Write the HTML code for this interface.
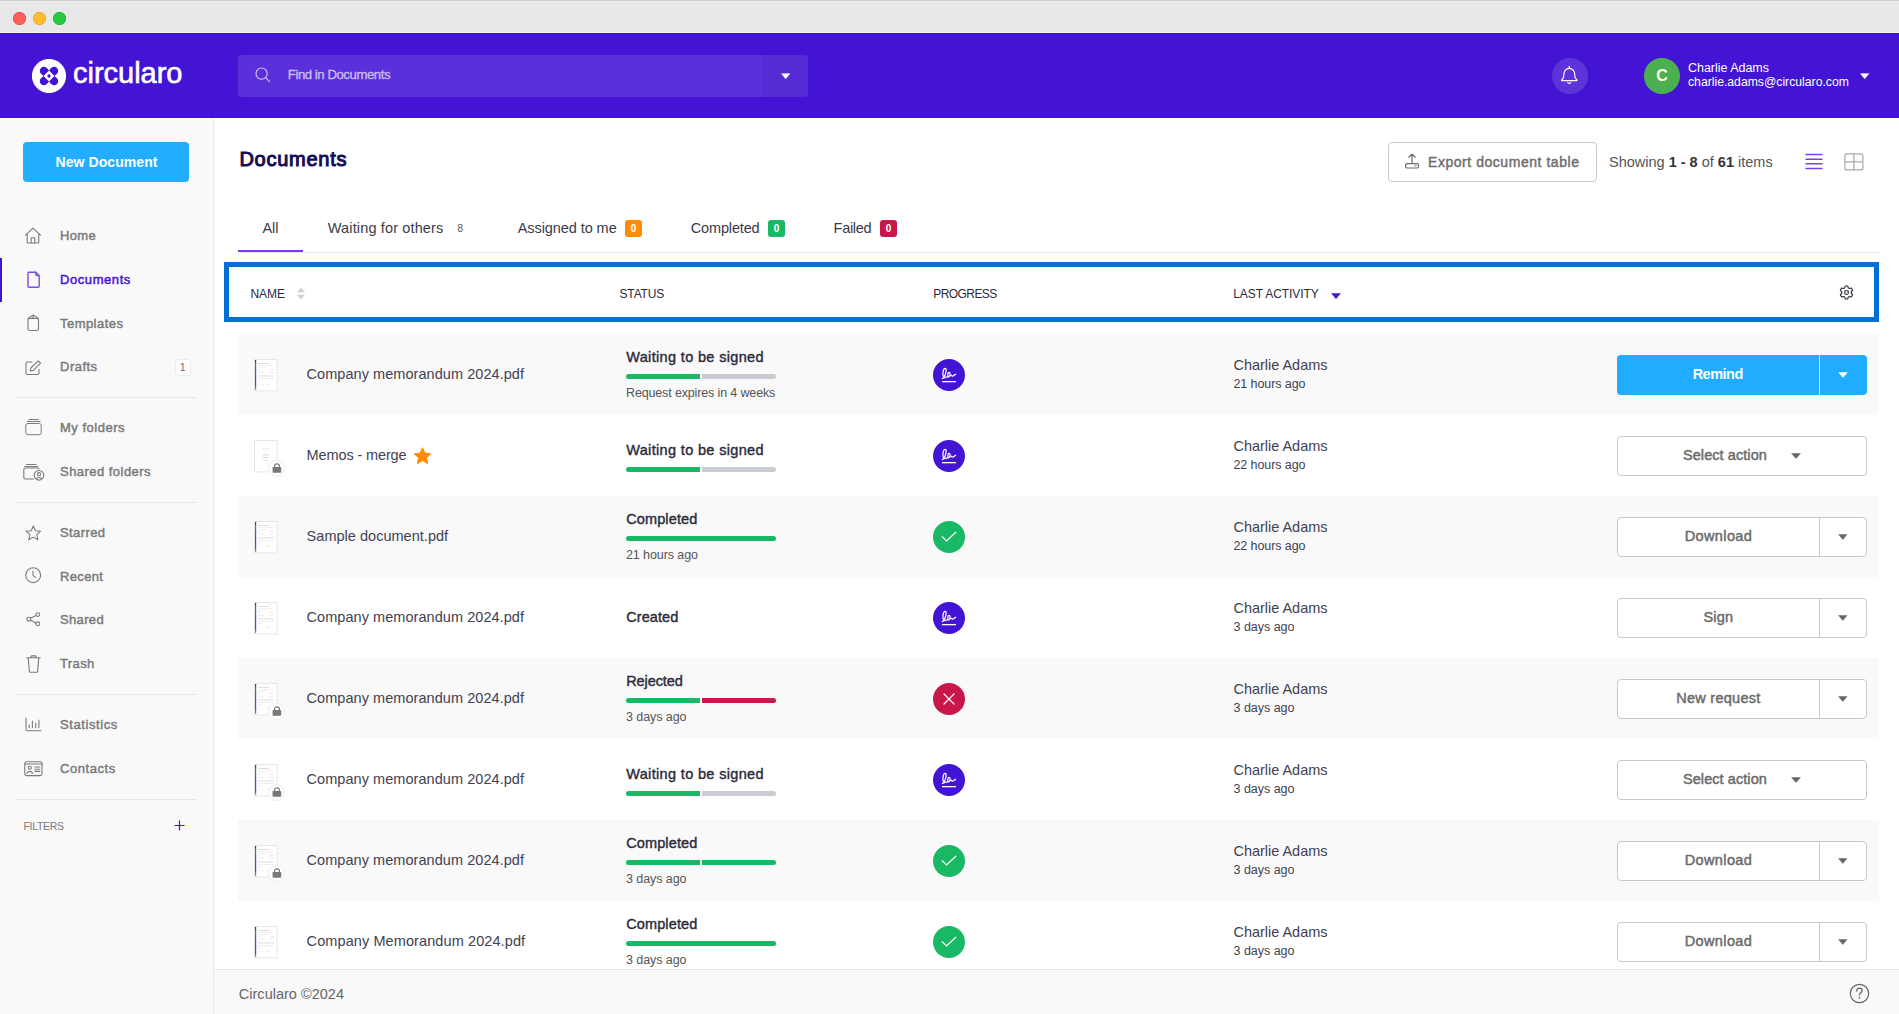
<!DOCTYPE html>
<html><head><meta charset="utf-8"><title>Circularo Documents</title>
<style>
html,body{margin:0;padding:0;width:1899px;height:1014px;overflow:hidden;background:#fff;}
body{position:relative;font-family:"Liberation Sans",sans-serif;}
.t{position:absolute;line-height:1;white-space:nowrap;}
.b{position:absolute;display:block;}
</style></head><body>
<div class="b" style="left:0px;top:0px;width:1899px;height:33px;background:#e8e8e8;"></div>
<div class="b" style="left:0px;top:0px;width:1899px;height:1px;background:#cdcdcd;"></div>
<div class="b" style="left:0px;top:1px;width:1899px;height:1px;background:#ebebeb;"></div>
<div class="b" style="left:0px;top:32px;width:1899px;height:1px;background:#f3f3ee;"></div>
<div class="b" style="left:12.5px;top:11.5px;width:13px;height:13px;background:#fe5f57;border-radius:50%;box-shadow:inset 0 0 0 0.6px #e2463f;"></div>
<div class="b" style="left:32.5px;top:11.5px;width:13px;height:13px;background:#febc2e;border-radius:50%;box-shadow:inset 0 0 0 0.6px #e1a116;"></div>
<div class="b" style="left:52.5px;top:11.5px;width:13px;height:13px;background:#28c840;border-radius:50%;box-shadow:inset 0 0 0 0.6px #14ae2c;"></div>
<div class="b" style="left:0px;top:33px;width:1899px;height:85px;background:#4314d4;"></div>
<svg class="b" style="left:31.75px;top:58.7px;" width="34" height="34" viewBox="0 0 34 34"><circle cx="17" cy="17" r="17.1" fill="#fff"/><g fill="#4314d4"><g transform="rotate(0 17 17)"><path d="M17.000 11.600 L15.041 9.265 A4.1 4.1 0 1 0 9.265 15.041 L11.600 17.000 Z"/></g><g transform="rotate(90 17 17)"><path d="M17.000 11.600 L15.041 9.265 A4.1 4.1 0 1 0 9.265 15.041 L11.600 17.000 Z"/></g><g transform="rotate(180 17 17)"><path d="M17.000 11.600 L15.041 9.265 A4.1 4.1 0 1 0 9.265 15.041 L11.600 17.000 Z"/></g><g transform="rotate(270 17 17)"><path d="M17.000 11.600 L15.041 9.265 A4.1 4.1 0 1 0 9.265 15.041 L11.600 17.000 Z"/></g><circle cx="17" cy="17" r="1.65"/></g></svg>
<div class="t" style="left:73.00px;top:58.75px;font-size:29px;color:#fff;letter-spacing:-0.011px;-webkit-text-stroke:0.6px #fff;">circularo</div>
<div class="b" style="left:238px;top:55px;width:570px;height:42px;background:#5a30da;border-radius:4px;"></div>
<div class="b" style="left:762px;top:55px;width:46px;height:42px;background:#552bd3;border-radius:0 4px 4px 0;"></div>
<svg class="b" style="left:255px;top:67px;" width="16" height="16" viewBox="0 0 16 16"><circle cx="6.6" cy="6.6" r="5.6" fill="none" stroke="#d2c6f5" stroke-width="1.1"/><line x1="10.6" y1="10.6" x2="14.8" y2="14.8" stroke="#d2c6f5" stroke-width="1.1"/></svg>
<div class="t" style="left:287.80px;top:68.43px;font-size:13.2px;color:#cdbff3;letter-spacing:-0.453px;-webkit-text-stroke:0.3px #cdbff3;">Find in Documents</div>
<svg class="b" style="left:780.5px;top:72.5px;" width="10" height="7" viewBox="0 0 10 7"><path d="M0.6 0.7 L8.8 0.7 L4.7 5.8 Z" fill="#fff" stroke="#fff" stroke-width="0.6" stroke-linejoin="round"/></svg>
<div class="b" style="left:1552px;top:58px;width:36px;height:36px;background:#5c34da;border-radius:50%;"></div>
<svg class="b" style="left:1559px;top:64px;" width="22" height="22" viewBox="0 0 22 22"><g fill="none" stroke="#fff" stroke-width="1.15" stroke-linejoin="round" stroke-linecap="round"><path d="M2.6 16.6 Q2.6 15.8 3.4 15.2 C4.4 14.2 4.8 13 4.8 11 C4.8 7.2 7.2 4.3 10.3 4.3 C13.4 4.3 15.8 7.2 15.8 11 C15.8 13 16.2 14.2 17.2 15.2 Q18 15.8 18 16.6 Z"/><path d="M10.3 2.3 V4.3"/><path d="M8.8 18.6 Q10.3 20 11.8 18.6"/></g></svg>
<div class="b" style="left:1644px;top:58px;width:36px;height:36px;background:#4caf50;border-radius:50%;"></div>
<div class="t" style="left:1656.22px;top:68.46px;font-size:16px;color:#fff8e0;font-weight:700;">C</div>
<div class="t" style="left:1688.00px;top:62.12px;font-size:12.5px;color:#fff;letter-spacing:-0.024px;">Charlie Adams</div>
<div class="t" style="left:1688.00px;top:76.07px;font-size:12.2px;color:#fff;letter-spacing:0.005px;">charlie.adams@circularo.com</div>
<svg class="b" style="left:1859.8px;top:72.5px;" width="10" height="7" viewBox="0 0 10 7"><path d="M0.6 0.7 L8.8 0.7 L4.7 5.8 Z" fill="#fff" stroke="#fff" stroke-width="0.6" stroke-linejoin="round"/></svg>
<div class="b" style="left:0px;top:118px;width:213px;height:896px;background:#f9f9f9;"></div>
<div class="b" style="left:213px;top:118px;width:1px;height:896px;background:#e9e9e9;"></div>
<div class="b" style="left:23px;top:142px;width:166px;height:40px;background:#22adff;border-radius:4px;"></div>
<div class="t" style="left:55.50px;top:155.15px;font-size:14px;color:#fff;font-weight:700;letter-spacing:0.080px;">New Document</div>
<div class="b" style="left:0px;top:258px;width:2px;height:44px;background:#4314d4;"></div>
<div class="t" style="left:60.00px;top:229.00px;font-size:13px;color:#7a7a7a;letter-spacing:0.330px;-webkit-text-stroke:0.45px #7a7a7a;">Home</div>
<div class="t" style="left:60.00px;top:273.00px;font-size:13px;color:#4510d0;letter-spacing:0.574px;-webkit-text-stroke:0.45px #4510d0;">Documents</div>
<div class="t" style="left:60.00px;top:317.00px;font-size:13px;color:#7a7a7a;letter-spacing:0.455px;-webkit-text-stroke:0.45px #7a7a7a;">Templates</div>
<div class="t" style="left:60.00px;top:360.00px;font-size:13px;color:#7a7a7a;letter-spacing:0.489px;-webkit-text-stroke:0.45px #7a7a7a;">Drafts</div>
<div class="t" style="left:60.00px;top:421.00px;font-size:13px;color:#7a7a7a;letter-spacing:0.511px;-webkit-text-stroke:0.45px #7a7a7a;">My folders</div>
<div class="t" style="left:60.00px;top:465.00px;font-size:13px;color:#7a7a7a;letter-spacing:0.463px;-webkit-text-stroke:0.45px #7a7a7a;">Shared folders</div>
<div class="t" style="left:60.00px;top:526.00px;font-size:13px;color:#7a7a7a;letter-spacing:0.406px;-webkit-text-stroke:0.45px #7a7a7a;">Starred</div>
<div class="t" style="left:60.00px;top:570.00px;font-size:13px;color:#7a7a7a;letter-spacing:0.342px;-webkit-text-stroke:0.45px #7a7a7a;">Recent</div>
<div class="t" style="left:60.00px;top:613.00px;font-size:13px;color:#7a7a7a;letter-spacing:0.340px;-webkit-text-stroke:0.45px #7a7a7a;">Shared</div>
<div class="t" style="left:60.00px;top:657.00px;font-size:13px;color:#7a7a7a;letter-spacing:0.371px;-webkit-text-stroke:0.45px #7a7a7a;">Trash</div>
<div class="t" style="left:60.00px;top:718.00px;font-size:13px;color:#7a7a7a;letter-spacing:0.593px;-webkit-text-stroke:0.45px #7a7a7a;">Statistics</div>
<div class="t" style="left:60.00px;top:762.00px;font-size:13px;color:#7a7a7a;letter-spacing:0.552px;-webkit-text-stroke:0.45px #7a7a7a;">Contacts</div>
<div class="b" style="left:15px;top:397px;width:182px;height:1px;background:#e6e6e6;"></div>
<div class="b" style="left:15px;top:502px;width:182px;height:1px;background:#e6e6e6;"></div>
<div class="b" style="left:15px;top:694px;width:182px;height:1px;background:#e6e6e6;"></div>
<div class="b" style="left:15px;top:799px;width:182px;height:1px;background:#e6e6e6;"></div>
<div class="b" style="left:174.5px;top:359px;width:16px;height:16.5px;background:#fff;border:1px solid #ebebeb;border-radius:3.5px;box-sizing:border-box;"></div>
<div class="t" style="left:179.68px;top:362.11px;font-size:10.5px;color:#666;">1</div>
<div class="t" style="left:23.50px;top:821.11px;font-size:10.5px;color:#7a7a7a;letter-spacing:-0.316px;">FILTERS</div>
<svg class="b" style="left:174px;top:819.6px;" width="11" height="11" viewBox="0 0 11 11"><path d="M5.5 0.5 V10.5 M0.5 5.5 H10.5" stroke="#4314d4" stroke-width="1.2"/></svg>
<svg class="b" style="left:24px;top:227px;" width="18" height="18" viewBox="0 0 18 18"><g fill="none" stroke="#7a7a7a" stroke-width="1.1" stroke-linecap="round" stroke-linejoin="round"><path d="M1.5 8.2 L9 1.2 L16.5 8.2"/><path d="M3.2 6.8 V15.2 Q3.2 16 4 16 H14 Q14.8 16 14.8 15.2 V6.8"/><path d="M7.2 16 V10.8 H10.8 V16"/></g></svg>
<svg class="b" style="left:26.5px;top:271px;" width="14" height="18" viewBox="0 0 14 18"><g fill="none" stroke="#7c4ee6" stroke-width="1.4" stroke-linecap="round" stroke-linejoin="round"><path d="M2 1.2 H8.8 L12.2 4.6 V15.2 Q12.2 16.2 11.2 16.2 H2 Q1 16.2 1 15.2 V2.2 Q1 1.2 2 1.2 Z"/><path d="M8.8 1.2 V3.6 Q8.8 4.6 9.8 4.6 H12.2"/></g></svg>
<svg class="b" style="left:27.2px;top:313.8px;" width="13" height="18" viewBox="0 0 13 18"><g fill="none" stroke="#7a7a7a" stroke-width="1.1" stroke-linecap="round" stroke-linejoin="round"><path d="M1 4.5 L6.25 1 L11.5 4.5"/><rect x="1" y="4.5" width="10.5" height="12" rx="1.8"/><circle cx="6.25" cy="3.2" r="0.4"/></g></svg>
<svg class="b" style="left:25px;top:359.5px;" width="17" height="16" viewBox="0 0 17 16"><g fill="none" stroke="#7a7a7a" stroke-width="1.1" stroke-linecap="round" stroke-linejoin="round"><path d="M7 2 H2.5 Q1 2 1 3.5 V13 Q1 14.5 2.5 14.5 H12.5 Q14 14.5 14 13 V9.2"/><path d="M5.2 11 L5.8 8 L13.2 0.8 L15.6 3.2 L8.2 10.4 Z"/></g></svg>
<svg class="b" style="left:25px;top:418px;" width="18" height="18" viewBox="0 0 18 18"><g fill="none" stroke="#7a7a7a" stroke-width="1.0" stroke-linecap="round" stroke-linejoin="round"><path d="M3.8 1.5 H13.2"/><path d="M2 3.5 H15"/><rect x="0.8" y="5.5" width="15.4" height="11.2" rx="2"/></g></svg>
<svg class="b" style="left:23px;top:462.5px;" width="22" height="18" viewBox="0 0 22 18"><g fill="none" stroke="#7a7a7a" stroke-width="1.1" stroke-linecap="round" stroke-linejoin="round"><path d="M3.5 1.5 H13"/><path d="M1.8 3.5 H14.8"/><path d="M10.5 16 H2.5 Q0.8 16 0.8 14.2 V6.8 Q0.8 5 2.5 5 H14.5 Q15.8 5 15.8 6"/><circle cx="16" cy="12.3" r="4.8" fill="#f9f9f9"/><circle cx="16" cy="11.2" r="1.6"/><path d="M13.4 15.6 Q16 13.4 18.6 15.6"/></g></svg>
<svg class="b" style="left:25px;top:524.5px;" width="17" height="16" viewBox="0 0 17 16"><g fill="none" stroke="#7a7a7a" stroke-width="1.1" stroke-linecap="round" stroke-linejoin="round"><path d="M8.3 1 L10.4 5.7 L15.6 6.2 L11.7 9.6 L12.9 14.8 L8.3 12.1 L3.7 14.8 L4.9 9.6 L1 6.2 L6.2 5.7 Z"/></g></svg>
<svg class="b" style="left:25px;top:567px;" width="17" height="17" viewBox="0 0 17 17"><g fill="none" stroke="#7a7a7a" stroke-width="1.1" stroke-linecap="round" stroke-linejoin="round"><circle cx="8.2" cy="8.2" r="7.4"/><path d="M8 4 V8.6 L10.8 10.4"/></g></svg>
<svg class="b" style="left:26px;top:612px;" width="15" height="15" viewBox="0 0 15 15"><g fill="none" stroke="#7a7a7a" stroke-width="1.1" stroke-linecap="round" stroke-linejoin="round"><circle cx="2.8" cy="7.2" r="1.9"/><circle cx="11.8" cy="2.6" r="1.9"/><circle cx="11.8" cy="11.8" r="1.9"/><path d="M4.5 6.2 L10.1 3.5 M4.5 8.2 L10.1 10.9"/></g></svg>
<svg class="b" style="left:26px;top:655px;" width="15" height="18" viewBox="0 0 15 18"><g fill="none" stroke="#7a7a7a" stroke-width="1.1" stroke-linecap="round" stroke-linejoin="round"><path d="M0.8 2.8 H14.2"/><path d="M5 2.8 V1.8 Q5 0.9 6 0.9 H9 Q10 0.9 10 1.8 V2.8"/><path d="M2.2 3 L3.4 16.6 Q3.5 17.2 4.2 17.2 H10.8 Q11.5 17.2 11.6 16.6 L12.8 3"/></g></svg>
<svg class="b" style="left:24.5px;top:716.5px;" width="17" height="15" viewBox="0 0 17 15"><g fill="none" stroke="#7a7a7a" stroke-width="1.1" stroke-linecap="round" stroke-linejoin="round"><path d="M1 1 V12.2 Q1 13.8 2.6 13.8 H16"/><path d="M4.2 10.8 V7.8 M7.4 10.8 V4 M10.8 10.8 V6 M13.9 10.8 V3"/></g></svg>
<svg class="b" style="left:23.5px;top:760.5px;" width="19" height="16" viewBox="0 0 19 16"><g fill="none" stroke="#7a7a7a" stroke-width="1.1" stroke-linecap="round" stroke-linejoin="round"><rect x="0.8" y="0.8" width="17.2" height="13.8" rx="1.8"/><path d="M0.8 3 H18"/><circle cx="5.8" cy="6.8" r="1.5"/><path d="M2.8 12.4 Q5.8 8.4 8.8 12.4"/><path d="M10.8 6 H15.8 M10.8 8.2 H15.8 M10.8 10.4 H15.8"/></g></svg>
<div class="t" style="left:239.40px;top:148.97px;font-size:20px;color:#150b52;letter-spacing:0.749px;-webkit-text-stroke:1.0px #150b52;">Documents</div>
<div class="b" style="left:1388px;top:142px;width:209px;height:40px;background:#fff;border:1px solid #c8c8c8;border-radius:4px;box-sizing:border-box;"></div>
<svg class="b" style="left:1404px;top:153px;" width="16" height="16" viewBox="0 0 16 16"><g fill="none" stroke="#6a6a6a" stroke-width="1.2" stroke-linecap="round" stroke-linejoin="round"><path d="M8 1.2 V10.5 M4.8 4.2 L8 1.2 L11.2 4.2"/><rect x="1.6" y="10.6" width="12.8" height="4.4" rx="1.2"/></g><rect x="10.4" y="12.3" width="2" height="1" fill="#6a6a6a"/></svg>
<div class="t" style="left:1428.00px;top:155.15px;font-size:14px;color:#6e6e6e;letter-spacing:0.544px;-webkit-text-stroke:0.45px #6e6e6e;">Export document table</div>
<div class="t" style="left:1609.00px;top:154.73px;font-size:14.5px;color:#555;">Showing <b style="color:#333">1 - 8</b> of <b style="color:#333">61</b> items</div>
<svg class="b" style="left:1805px;top:153px;" width="18" height="17" viewBox="0 0 18 17"><g stroke="#7b3ff2" stroke-width="1.6"><path d="M0.5 1.5 H17.5 M0.5 6.2 H17.5 M0.5 10.8 H17.5 M0.5 15.5 H17.5"/></g></svg>
<svg class="b" style="left:1843.5px;top:152.5px;" width="20" height="18" viewBox="0 0 20 18"><g fill="none" stroke="#a9a9a9" stroke-width="1.2"><rect x="0.9" y="0.9" width="18" height="16" rx="2"/><path d="M9.9 0.9 V16.9 M0.9 8.9 H18.9"/></g></svg>
<div class="t" style="left:262.40px;top:220.73px;font-size:14.5px;color:#3b3b4a;letter-spacing:-0.058px;">All</div>
<div class="t" style="left:327.80px;top:220.73px;font-size:14.5px;color:#3b3b4a;letter-spacing:0.142px;">Waiting for others</div>
<div class="t" style="left:457.50px;top:223.53px;font-size:10px;color:#555;">8</div>
<div class="t" style="left:517.70px;top:220.73px;font-size:14.5px;color:#3b3b4a;letter-spacing:-0.072px;">Assigned to me</div>
<div class="b" style="left:625px;top:220px;width:17px;height:17px;background:#fd8c06;border-radius:3px;"></div>
<div class="t" style="left:630.72px;top:223.53px;font-size:10px;color:#fff;font-weight:700;">0</div>
<div class="t" style="left:690.70px;top:220.73px;font-size:14.5px;color:#3b3b4a;letter-spacing:-0.140px;">Completed</div>
<div class="b" style="left:768px;top:220px;width:17px;height:17px;background:#19b865;border-radius:3px;"></div>
<div class="t" style="left:773.72px;top:223.53px;font-size:10px;color:#fff;font-weight:700;">0</div>
<div class="t" style="left:833.60px;top:220.73px;font-size:14.5px;color:#3b3b4a;letter-spacing:-0.299px;">Failed</div>
<div class="b" style="left:880px;top:220px;width:17px;height:17px;background:#c8174b;border-radius:3px;"></div>
<div class="t" style="left:885.72px;top:223.53px;font-size:10px;color:#fff;font-weight:700;">0</div>
<div class="b" style="left:238px;top:252px;width:1641px;height:1px;background:#e6e6e6;"></div>
<div class="b" style="left:238px;top:250px;width:65px;height:2px;background:#7c3aed;"></div>
<div class="b" style="left:224px;top:262px;width:1655px;height:60px;border:5px solid #006fd6;box-sizing:border-box;"></div>
<div class="t" style="left:250.50px;top:287.84px;font-size:12px;color:#2a2a3a;letter-spacing:-0.057px;">NAME</div>
<svg class="b" style="left:296px;top:286.5px;" width="10" height="13" viewBox="0 0 10 13"><path d="M5 0.8 L9 5.2 H1 Z M5 12.2 L9 7.8 H1 Z" fill="#cfcfcf"/></svg>
<div class="t" style="left:619.50px;top:287.84px;font-size:12px;color:#2a2a3a;letter-spacing:-0.152px;">STATUS</div>
<div class="t" style="left:933.30px;top:287.84px;font-size:12px;color:#2a2a3a;letter-spacing:-0.574px;">PROGRESS</div>
<div class="t" style="left:1233.20px;top:287.84px;font-size:12px;color:#2a2a3a;letter-spacing:-0.073px;">LAST ACTIVITY</div>
<svg class="b" style="left:1330.5px;top:292.5px;" width="10" height="6.5" viewBox="0 0 10 6.5"><path d="M0.6 0.6 L9.4 0.6 L5.0 5.8 Z" fill="#4314d4" stroke="#4314d4" stroke-width="0.5" stroke-linejoin="round"/></svg>
<svg class="b" style="left:1839px;top:285px;" width="15" height="15" viewBox="0 0 15 15"><g fill="none" stroke="#2a2a3a" stroke-width="1.1" stroke-linejoin="round"><path d="M6.2 1 H8.8 L9.2 2.8 L10.6 3.6 L12.4 3 L13.7 5.2 L12.3 6.5 V8.5 L13.7 9.8 L12.4 12 L10.6 11.4 L9.2 12.2 L8.8 14 H6.2 L5.8 12.2 L4.4 11.4 L2.6 12 L1.3 9.8 L2.7 8.5 V6.5 L1.3 5.2 L2.6 3 L4.4 3.6 L5.8 2.8 Z"/><rect x="5.8" y="5.8" width="3.4" height="3.4" rx="0.6"/></g></svg>
<div class="b" style="left:238px;top:334px;width:1641px;height:81px;background:#f9f9f9;"></div>
<svg class="b" style="left:254px;top:358.5px;" width="24" height="33" viewBox="0 0 24 33"><rect x="0.5" y="0.5" width="22.6" height="31.4" fill="#fff" stroke="#e6e6e6" stroke-width="1"/><defs><linearGradient id="sg358" x1="0" y1="0" x2="0" y2="1"><stop offset="0" stop-color="#333"/><stop offset="0.15" stop-color="#2a8f6a"/><stop offset="0.45" stop-color="#2f55e8"/><stop offset="0.85" stop-color="#3a4fe0"/><stop offset="1" stop-color="#e0902a"/></linearGradient></defs><rect x="1" y="1" width="1.2" height="30" fill="url(#sg358)"/><rect x="4" y="4" width="11" height="0.6" fill="#666" opacity="0.36"/><rect x="4" y="6.5" width="15" height="0.6" fill="#666" opacity="0.15"/><rect x="4" y="8.5" width="8" height="0.6" fill="#666" opacity="0.15"/><rect x="4" y="10.2" width="2" height="0.6" fill="#666" opacity="0.24"/><rect x="16" y="10.2" width="4" height="0.6" fill="#666" opacity="0.24"/><rect x="4" y="12.8" width="6" height="0.6" fill="#666" opacity="0.21"/><rect x="15" y="12.8" width="5" height="0.6" fill="#666" opacity="0.21"/><rect x="4" y="16" width="16" height="0.6" fill="#666" opacity="0.21"/><rect x="4" y="17.2" width="16" height="0.6" fill="#666" opacity="0.18"/><rect x="4" y="19.2" width="16" height="0.6" fill="#666" opacity="0.18"/><rect x="4" y="21" width="3" height="0.6" fill="#666" opacity="0.21"/><rect x="13" y="24.8" width="3" height="0.6" fill="#666" opacity="0.30"/><rect x="4" y="25.6" width="2" height="0.6" fill="#666" opacity="0.12"/><rect x="8" y="25.6" width="2" height="0.6" fill="#666" opacity="0.12"/></svg>
<div class="t" style="left:306.60px;top:366.73px;font-size:14.5px;color:#424252;letter-spacing:0.054px;">Company memorandum 2024.pdf</div>
<div class="t" style="left:626.20px;top:349.73px;font-size:14.5px;color:#2b2b3b;letter-spacing:0.345px;-webkit-text-stroke:0.4px #2b2b3b;">Waiting to be signed</div>
<div class="b" style="left:626px;top:374px;width:74px;height:5px;background:#19b865;border-radius:2.5px 0 0 2.5px;"></div>
<div class="b" style="left:702px;top:374px;width:74px;height:5px;background:#c9ccd1;border-radius:0 2.5px 2.5px 0;"></div>
<div class="t" style="left:626.00px;top:387.02px;font-size:12.5px;color:#555;letter-spacing:-0.142px;">Request expires in 4 weeks</div>
<div class="b" style="left:933px;top:359px;width:32px;height:32px;background:#4314d4;border-radius:50%;"></div>
<svg class="b" style="left:938px;top:364px;" width="22" height="22" viewBox="0 0 22 22"><g fill="none" stroke="#fff" stroke-width="1.25" stroke-linecap="round" stroke-linejoin="round"><path d="M5.6 13.2 C4.9 12 4.8 10.2 5 8.4 C5.3 5.8 6.1 4.2 7.2 4.3 C8.4 4.4 8.3 6.4 7.8 8.6 C7.3 10.8 6.5 12.6 5.6 13.2 Z"/><path d="M4.3 14.5 Q7 12.9 9.8 12.8"/><path d="M10.2 12.6 C9.5 11.4 9.7 8.4 11 8.4 C12.4 8.4 12.3 11.4 11.4 12.4 C10.9 12.9 10.4 12.8 10.2 12.6"/><path d="M12.3 11.6 Q13 10.8 13.6 11.7 Q14.3 12.6 15.2 11.7 L17.6 10.4"/></g><rect x="4" y="17" width="14" height="1.3" fill="#fff"/></svg>
<div class="t" style="left:1233.50px;top:357.73px;font-size:14.5px;color:#424252;letter-spacing:-0.024px;">Charlie Adams</div>
<div class="t" style="left:1233.50px;top:378.12px;font-size:12.5px;color:#424252;letter-spacing:-0.088px;">21 hours ago</div>
<div class="b" style="left:1617px;top:355px;width:250px;height:40px;background:#20adff;border-radius:4px;"></div>
<div class="b" style="left:1819px;top:355px;width:1px;height:40px;background:#cdeeff;"></div>
<div class="t" style="left:1692.65px;top:366.73px;font-size:14.5px;color:#fff;font-weight:700;letter-spacing:-0.494px;">Remind</div>
<svg class="b" style="left:1838px;top:371.5px;" width="10" height="6.2" viewBox="0 0 10 6.2"><path d="M0.6 0.6 L9.4 0.6 L5.0 5.5 Z" fill="#fff" stroke="#fff" stroke-width="0.5" stroke-linejoin="round"/></svg>
<svg class="b" style="left:254px;top:439.5px;" width="24" height="33" viewBox="0 0 24 33"><rect x="0.5" y="0.5" width="22.6" height="31.4" fill="#fff" stroke="#e6e6e6" stroke-width="1"/><rect x="9" y="8.5" width="6" height="0.8" fill="#666" opacity="0.24"/><rect x="10" y="11.5" width="4" height="0.8" fill="#666" opacity="0.14"/><rect x="9" y="14.5" width="6" height="0.8" fill="#666" opacity="0.35"/><rect x="9" y="17" width="5" height="0.8" fill="#666" opacity="0.35"/><rect x="10" y="20" width="4" height="0.8" fill="#666" opacity="0.28"/><rect x="4" y="28.5" width="4" height="0.8" fill="#666" opacity="0.10"/></svg>
<div class="b" style="left:267.5px;top:460.0px;width:17px;height:17px;background:#fff;border:1px solid #ececec;border-radius:50%;box-sizing:border-box;"></div>
<svg class="b" style="left:271.5px;top:463.0px;" width="10" height="10" viewBox="0 0 10 10"><path d="M2.6 4.2 V3.1 Q2.6 0.8 5 0.8 Q7.4 0.8 7.4 3.1 V4.2" fill="none" stroke="#787878" stroke-width="1.2"/><rect x="0.6" y="3.9" width="8.6" height="5.9" rx="0.7" fill="#787878"/></svg>
<div class="t" style="left:306.60px;top:447.73px;font-size:14.5px;color:#424252;letter-spacing:-0.126px;">Memos - merge</div>
<svg class="b" style="left:413px;top:446.5px;" width="19" height="18" viewBox="0 0 19 18"><path d="M9.5 0.8 L12 6.2 L17.8 6.8 L13.4 10.8 L14.7 16.6 L9.5 13.6 L4.3 16.6 L5.6 10.8 L1.2 6.8 L7 6.2 Z" fill="#ff8c00" stroke="#ff8c00" stroke-width="1" stroke-linejoin="round"/></svg>
<div class="t" style="left:626.20px;top:443.23px;font-size:14.5px;color:#2b2b3b;letter-spacing:0.345px;-webkit-text-stroke:0.4px #2b2b3b;">Waiting to be signed</div>
<div class="b" style="left:626px;top:467px;width:74px;height:5px;background:#19b865;border-radius:2.5px 0 0 2.5px;"></div>
<div class="b" style="left:702px;top:467px;width:74px;height:5px;background:#c9ccd1;border-radius:0 2.5px 2.5px 0;"></div>
<div class="b" style="left:933px;top:440px;width:32px;height:32px;background:#4314d4;border-radius:50%;"></div>
<svg class="b" style="left:938px;top:445px;" width="22" height="22" viewBox="0 0 22 22"><g fill="none" stroke="#fff" stroke-width="1.25" stroke-linecap="round" stroke-linejoin="round"><path d="M5.6 13.2 C4.9 12 4.8 10.2 5 8.4 C5.3 5.8 6.1 4.2 7.2 4.3 C8.4 4.4 8.3 6.4 7.8 8.6 C7.3 10.8 6.5 12.6 5.6 13.2 Z"/><path d="M4.3 14.5 Q7 12.9 9.8 12.8"/><path d="M10.2 12.6 C9.5 11.4 9.7 8.4 11 8.4 C12.4 8.4 12.3 11.4 11.4 12.4 C10.9 12.9 10.4 12.8 10.2 12.6"/><path d="M12.3 11.6 Q13 10.8 13.6 11.7 Q14.3 12.6 15.2 11.7 L17.6 10.4"/></g><rect x="4" y="17" width="14" height="1.3" fill="#fff"/></svg>
<div class="t" style="left:1233.50px;top:438.73px;font-size:14.5px;color:#424252;letter-spacing:-0.024px;">Charlie Adams</div>
<div class="t" style="left:1233.50px;top:459.12px;font-size:12.5px;color:#424252;letter-spacing:-0.088px;">22 hours ago</div>
<div class="b" style="left:1617px;top:436px;width:250px;height:40px;background:#fff;border:1px solid #c8c8c8;border-radius:4px;box-sizing:border-box;"></div>
<div class="t" style="left:1683.00px;top:447.73px;font-size:14.5px;color:#6a6a6a;letter-spacing:0.069px;-webkit-text-stroke:0.45px #6a6a6a;">Select action</div>
<svg class="b" style="left:1791px;top:452.5px;" width="10" height="6.2" viewBox="0 0 10 6.2"><path d="M0.6 0.6 L9.4 0.6 L5.0 5.5 Z" fill="#666" stroke="#666" stroke-width="0.5" stroke-linejoin="round"/></svg>
<div class="b" style="left:238px;top:496px;width:1641px;height:81px;background:#f9f9f9;"></div>
<svg class="b" style="left:254px;top:520.5px;" width="24" height="33" viewBox="0 0 24 33"><rect x="0.5" y="0.5" width="22.6" height="31.4" fill="#fff" stroke="#e6e6e6" stroke-width="1"/><defs><linearGradient id="sg520" x1="0" y1="0" x2="0" y2="1"><stop offset="0" stop-color="#333"/><stop offset="0.15" stop-color="#2a8f6a"/><stop offset="0.45" stop-color="#2f55e8"/><stop offset="0.85" stop-color="#3a4fe0"/><stop offset="1" stop-color="#e0902a"/></linearGradient></defs><rect x="1" y="1" width="1.2" height="30" fill="url(#sg520)"/><rect x="4" y="4" width="11" height="0.6" fill="#666" opacity="0.36"/><rect x="4" y="6.5" width="15" height="0.6" fill="#666" opacity="0.15"/><rect x="4" y="8.5" width="8" height="0.6" fill="#666" opacity="0.15"/><rect x="4" y="10.2" width="2" height="0.6" fill="#666" opacity="0.24"/><rect x="16" y="10.2" width="4" height="0.6" fill="#666" opacity="0.24"/><rect x="4" y="12.8" width="6" height="0.6" fill="#666" opacity="0.21"/><rect x="15" y="12.8" width="5" height="0.6" fill="#666" opacity="0.21"/><rect x="4" y="16" width="16" height="0.6" fill="#666" opacity="0.21"/><rect x="4" y="17.2" width="16" height="0.6" fill="#666" opacity="0.18"/><rect x="4" y="19.2" width="16" height="0.6" fill="#666" opacity="0.18"/><rect x="4" y="21" width="3" height="0.6" fill="#666" opacity="0.21"/><rect x="13" y="24.8" width="3" height="0.6" fill="#666" opacity="0.30"/><rect x="4" y="25.6" width="2" height="0.6" fill="#666" opacity="0.12"/><rect x="8" y="25.6" width="2" height="0.6" fill="#666" opacity="0.12"/></svg>
<div class="t" style="left:306.60px;top:528.73px;font-size:14.5px;color:#424252;letter-spacing:0.025px;">Sample document.pdf</div>
<div class="t" style="left:626.20px;top:511.73px;font-size:14.5px;color:#2b2b3b;letter-spacing:0.122px;-webkit-text-stroke:0.4px #2b2b3b;">Completed</div>
<div class="b" style="left:626px;top:536px;width:150px;height:5px;background:#19b865;border-radius:2.5px;"></div>
<div class="t" style="left:626.00px;top:549.02px;font-size:12.5px;color:#555;letter-spacing:-0.088px;">21 hours ago</div>
<div class="b" style="left:933px;top:521px;width:32px;height:32px;background:#19b865;border-radius:50%;"></div>
<svg class="b" style="left:941px;top:531px;" width="16" height="12" viewBox="0 0 16 12"><path d="M1.2 5.8 L5.6 10 L14.8 1.2" fill="none" stroke="#fff" stroke-width="1.2" stroke-linecap="round"/></svg>
<div class="t" style="left:1233.50px;top:519.73px;font-size:14.5px;color:#424252;letter-spacing:-0.024px;">Charlie Adams</div>
<div class="t" style="left:1233.50px;top:540.12px;font-size:12.5px;color:#424252;letter-spacing:-0.088px;">22 hours ago</div>
<div class="b" style="left:1617px;top:517px;width:250px;height:40px;background:#fff;border:1px solid #c8c8c8;border-radius:4px;box-sizing:border-box;"></div>
<div class="b" style="left:1819px;top:517px;width:1px;height:40px;background:#c8c8c8;"></div>
<div class="t" style="left:1684.65px;top:528.73px;font-size:14.5px;color:#6a6a6a;letter-spacing:0.395px;-webkit-text-stroke:0.45px #6a6a6a;">Download</div>
<svg class="b" style="left:1838px;top:533.5px;" width="9.6" height="6.2" viewBox="0 0 9.6 6.2"><path d="M0.6 0.6 L9.0 0.6 L4.8 5.5 Z" fill="#666" stroke="#666" stroke-width="0.5" stroke-linejoin="round"/></svg>
<svg class="b" style="left:254px;top:601.5px;" width="24" height="33" viewBox="0 0 24 33"><rect x="0.5" y="0.5" width="22.6" height="31.4" fill="#fff" stroke="#e6e6e6" stroke-width="1"/><defs><linearGradient id="sg601" x1="0" y1="0" x2="0" y2="1"><stop offset="0" stop-color="#333"/><stop offset="0.15" stop-color="#2a8f6a"/><stop offset="0.45" stop-color="#2f55e8"/><stop offset="0.85" stop-color="#3a4fe0"/><stop offset="1" stop-color="#e0902a"/></linearGradient></defs><rect x="1" y="1" width="1.2" height="30" fill="url(#sg601)"/><rect x="4" y="4" width="11" height="0.6" fill="#666" opacity="0.36"/><rect x="4" y="6.5" width="15" height="0.6" fill="#666" opacity="0.15"/><rect x="4" y="8.5" width="8" height="0.6" fill="#666" opacity="0.15"/><rect x="4" y="10.2" width="2" height="0.6" fill="#666" opacity="0.24"/><rect x="16" y="10.2" width="4" height="0.6" fill="#666" opacity="0.24"/><rect x="4" y="12.8" width="6" height="0.6" fill="#666" opacity="0.21"/><rect x="15" y="12.8" width="5" height="0.6" fill="#666" opacity="0.21"/><rect x="4" y="16" width="16" height="0.6" fill="#666" opacity="0.21"/><rect x="4" y="17.2" width="16" height="0.6" fill="#666" opacity="0.18"/><rect x="4" y="19.2" width="16" height="0.6" fill="#666" opacity="0.18"/><rect x="4" y="21" width="3" height="0.6" fill="#666" opacity="0.21"/><rect x="13" y="24.8" width="3" height="0.6" fill="#666" opacity="0.30"/><rect x="4" y="25.6" width="2" height="0.6" fill="#666" opacity="0.12"/><rect x="8" y="25.6" width="2" height="0.6" fill="#666" opacity="0.12"/></svg>
<div class="t" style="left:306.60px;top:609.73px;font-size:14.5px;color:#424252;letter-spacing:0.054px;">Company memorandum 2024.pdf</div>
<div class="t" style="left:626.20px;top:610.33px;font-size:14.5px;color:#2b2b3b;letter-spacing:0.086px;-webkit-text-stroke:0.4px #2b2b3b;">Created</div>
<div class="b" style="left:933px;top:602px;width:32px;height:32px;background:#4314d4;border-radius:50%;"></div>
<svg class="b" style="left:938px;top:607px;" width="22" height="22" viewBox="0 0 22 22"><g fill="none" stroke="#fff" stroke-width="1.25" stroke-linecap="round" stroke-linejoin="round"><path d="M5.6 13.2 C4.9 12 4.8 10.2 5 8.4 C5.3 5.8 6.1 4.2 7.2 4.3 C8.4 4.4 8.3 6.4 7.8 8.6 C7.3 10.8 6.5 12.6 5.6 13.2 Z"/><path d="M4.3 14.5 Q7 12.9 9.8 12.8"/><path d="M10.2 12.6 C9.5 11.4 9.7 8.4 11 8.4 C12.4 8.4 12.3 11.4 11.4 12.4 C10.9 12.9 10.4 12.8 10.2 12.6"/><path d="M12.3 11.6 Q13 10.8 13.6 11.7 Q14.3 12.6 15.2 11.7 L17.6 10.4"/></g><rect x="4" y="17" width="14" height="1.3" fill="#fff"/></svg>
<div class="t" style="left:1233.50px;top:600.73px;font-size:14.5px;color:#424252;letter-spacing:-0.024px;">Charlie Adams</div>
<div class="t" style="left:1233.50px;top:621.12px;font-size:12.5px;color:#424252;letter-spacing:-0.017px;">3 days ago</div>
<div class="b" style="left:1617px;top:598px;width:250px;height:40px;background:#fff;border:1px solid #c8c8c8;border-radius:4px;box-sizing:border-box;"></div>
<div class="b" style="left:1819px;top:598px;width:1px;height:40px;background:#c8c8c8;"></div>
<div class="t" style="left:1703.50px;top:609.73px;font-size:14.5px;color:#6a6a6a;letter-spacing:0.176px;-webkit-text-stroke:0.45px #6a6a6a;">Sign</div>
<svg class="b" style="left:1838px;top:614.5px;" width="9.6" height="6.2" viewBox="0 0 9.6 6.2"><path d="M0.6 0.6 L9.0 0.6 L4.8 5.5 Z" fill="#666" stroke="#666" stroke-width="0.5" stroke-linejoin="round"/></svg>
<div class="b" style="left:238px;top:658px;width:1641px;height:81px;background:#f9f9f9;"></div>
<svg class="b" style="left:254px;top:682.5px;" width="24" height="33" viewBox="0 0 24 33"><rect x="0.5" y="0.5" width="22.6" height="31.4" fill="#fff" stroke="#e6e6e6" stroke-width="1"/><defs><linearGradient id="sg682" x1="0" y1="0" x2="0" y2="1"><stop offset="0" stop-color="#333"/><stop offset="0.15" stop-color="#2a8f6a"/><stop offset="0.45" stop-color="#2f55e8"/><stop offset="0.85" stop-color="#3a4fe0"/><stop offset="1" stop-color="#e0902a"/></linearGradient></defs><rect x="1" y="1" width="1.2" height="30" fill="url(#sg682)"/><rect x="4" y="4" width="11" height="0.6" fill="#666" opacity="0.36"/><rect x="4" y="6.5" width="15" height="0.6" fill="#666" opacity="0.15"/><rect x="4" y="8.5" width="8" height="0.6" fill="#666" opacity="0.15"/><rect x="4" y="10.2" width="2" height="0.6" fill="#666" opacity="0.24"/><rect x="16" y="10.2" width="4" height="0.6" fill="#666" opacity="0.24"/><rect x="4" y="12.8" width="6" height="0.6" fill="#666" opacity="0.21"/><rect x="15" y="12.8" width="5" height="0.6" fill="#666" opacity="0.21"/><rect x="4" y="16" width="16" height="0.6" fill="#666" opacity="0.21"/><rect x="4" y="17.2" width="16" height="0.6" fill="#666" opacity="0.18"/><rect x="4" y="19.2" width="16" height="0.6" fill="#666" opacity="0.18"/><rect x="4" y="21" width="3" height="0.6" fill="#666" opacity="0.21"/><rect x="13" y="24.8" width="3" height="0.6" fill="#666" opacity="0.30"/><rect x="4" y="25.6" width="2" height="0.6" fill="#666" opacity="0.12"/><rect x="8" y="25.6" width="2" height="0.6" fill="#666" opacity="0.12"/></svg>
<div class="b" style="left:267.5px;top:703.0px;width:17px;height:17px;background:#fff;border:1px solid #ececec;border-radius:50%;box-sizing:border-box;"></div>
<svg class="b" style="left:271.5px;top:706.0px;" width="10" height="10" viewBox="0 0 10 10"><path d="M2.6 4.2 V3.1 Q2.6 0.8 5 0.8 Q7.4 0.8 7.4 3.1 V4.2" fill="none" stroke="#787878" stroke-width="1.2"/><rect x="0.6" y="3.9" width="8.6" height="5.9" rx="0.7" fill="#787878"/></svg>
<div class="t" style="left:306.60px;top:690.73px;font-size:14.5px;color:#424252;letter-spacing:0.054px;">Company memorandum 2024.pdf</div>
<div class="t" style="left:626.20px;top:673.73px;font-size:14.5px;color:#2b2b3b;letter-spacing:-0.090px;-webkit-text-stroke:0.4px #2b2b3b;">Rejected</div>
<div class="b" style="left:626px;top:698px;width:74px;height:5px;background:#19b865;border-radius:2.5px 0 0 2.5px;"></div>
<div class="b" style="left:702px;top:698px;width:74px;height:5px;background:#c8174b;border-radius:0 2.5px 2.5px 0;"></div>
<div class="t" style="left:626.00px;top:711.02px;font-size:12.5px;color:#555;letter-spacing:-0.073px;">3 days ago</div>
<div class="b" style="left:933px;top:683px;width:32px;height:32px;background:#c8174b;border-radius:50%;"></div>
<svg class="b" style="left:943px;top:693px;" width="12" height="12" viewBox="0 0 12 12"><path d="M1 1 L11 11 M11 1 L1 11" fill="none" stroke="#fff" stroke-width="1.2" stroke-linecap="round"/></svg>
<div class="t" style="left:1233.50px;top:681.73px;font-size:14.5px;color:#424252;letter-spacing:-0.024px;">Charlie Adams</div>
<div class="t" style="left:1233.50px;top:702.12px;font-size:12.5px;color:#424252;letter-spacing:-0.017px;">3 days ago</div>
<div class="b" style="left:1617px;top:679px;width:250px;height:40px;background:#fff;border:1px solid #c8c8c8;border-radius:4px;box-sizing:border-box;"></div>
<div class="b" style="left:1819px;top:679px;width:1px;height:40px;background:#c8c8c8;"></div>
<div class="t" style="left:1676.25px;top:690.73px;font-size:14.5px;color:#6a6a6a;letter-spacing:0.265px;-webkit-text-stroke:0.45px #6a6a6a;">New request</div>
<svg class="b" style="left:1838px;top:695.5px;" width="9.6" height="6.2" viewBox="0 0 9.6 6.2"><path d="M0.6 0.6 L9.0 0.6 L4.8 5.5 Z" fill="#666" stroke="#666" stroke-width="0.5" stroke-linejoin="round"/></svg>
<svg class="b" style="left:254px;top:763.5px;" width="24" height="33" viewBox="0 0 24 33"><rect x="0.5" y="0.5" width="22.6" height="31.4" fill="#fff" stroke="#e6e6e6" stroke-width="1"/><defs><linearGradient id="sg763" x1="0" y1="0" x2="0" y2="1"><stop offset="0" stop-color="#333"/><stop offset="0.15" stop-color="#2a8f6a"/><stop offset="0.45" stop-color="#2f55e8"/><stop offset="0.85" stop-color="#3a4fe0"/><stop offset="1" stop-color="#e0902a"/></linearGradient></defs><rect x="1" y="1" width="1.2" height="30" fill="url(#sg763)"/><rect x="4" y="4" width="11" height="0.6" fill="#666" opacity="0.36"/><rect x="4" y="6.5" width="15" height="0.6" fill="#666" opacity="0.15"/><rect x="4" y="8.5" width="8" height="0.6" fill="#666" opacity="0.15"/><rect x="4" y="10.2" width="2" height="0.6" fill="#666" opacity="0.24"/><rect x="16" y="10.2" width="4" height="0.6" fill="#666" opacity="0.24"/><rect x="4" y="12.8" width="6" height="0.6" fill="#666" opacity="0.21"/><rect x="15" y="12.8" width="5" height="0.6" fill="#666" opacity="0.21"/><rect x="4" y="16" width="16" height="0.6" fill="#666" opacity="0.21"/><rect x="4" y="17.2" width="16" height="0.6" fill="#666" opacity="0.18"/><rect x="4" y="19.2" width="16" height="0.6" fill="#666" opacity="0.18"/><rect x="4" y="21" width="3" height="0.6" fill="#666" opacity="0.21"/><rect x="13" y="24.8" width="3" height="0.6" fill="#666" opacity="0.30"/><rect x="4" y="25.6" width="2" height="0.6" fill="#666" opacity="0.12"/><rect x="8" y="25.6" width="2" height="0.6" fill="#666" opacity="0.12"/></svg>
<div class="b" style="left:267.5px;top:784.0px;width:17px;height:17px;background:#fff;border:1px solid #ececec;border-radius:50%;box-sizing:border-box;"></div>
<svg class="b" style="left:271.5px;top:787.0px;" width="10" height="10" viewBox="0 0 10 10"><path d="M2.6 4.2 V3.1 Q2.6 0.8 5 0.8 Q7.4 0.8 7.4 3.1 V4.2" fill="none" stroke="#787878" stroke-width="1.2"/><rect x="0.6" y="3.9" width="8.6" height="5.9" rx="0.7" fill="#787878"/></svg>
<div class="t" style="left:306.60px;top:771.73px;font-size:14.5px;color:#424252;letter-spacing:0.054px;">Company memorandum 2024.pdf</div>
<div class="t" style="left:626.20px;top:767.23px;font-size:14.5px;color:#2b2b3b;letter-spacing:0.345px;-webkit-text-stroke:0.4px #2b2b3b;">Waiting to be signed</div>
<div class="b" style="left:626px;top:791px;width:74px;height:5px;background:#19b865;border-radius:2.5px 0 0 2.5px;"></div>
<div class="b" style="left:702px;top:791px;width:74px;height:5px;background:#c9ccd1;border-radius:0 2.5px 2.5px 0;"></div>
<div class="b" style="left:933px;top:764px;width:32px;height:32px;background:#4314d4;border-radius:50%;"></div>
<svg class="b" style="left:938px;top:769px;" width="22" height="22" viewBox="0 0 22 22"><g fill="none" stroke="#fff" stroke-width="1.25" stroke-linecap="round" stroke-linejoin="round"><path d="M5.6 13.2 C4.9 12 4.8 10.2 5 8.4 C5.3 5.8 6.1 4.2 7.2 4.3 C8.4 4.4 8.3 6.4 7.8 8.6 C7.3 10.8 6.5 12.6 5.6 13.2 Z"/><path d="M4.3 14.5 Q7 12.9 9.8 12.8"/><path d="M10.2 12.6 C9.5 11.4 9.7 8.4 11 8.4 C12.4 8.4 12.3 11.4 11.4 12.4 C10.9 12.9 10.4 12.8 10.2 12.6"/><path d="M12.3 11.6 Q13 10.8 13.6 11.7 Q14.3 12.6 15.2 11.7 L17.6 10.4"/></g><rect x="4" y="17" width="14" height="1.3" fill="#fff"/></svg>
<div class="t" style="left:1233.50px;top:762.73px;font-size:14.5px;color:#424252;letter-spacing:-0.024px;">Charlie Adams</div>
<div class="t" style="left:1233.50px;top:783.12px;font-size:12.5px;color:#424252;letter-spacing:-0.017px;">3 days ago</div>
<div class="b" style="left:1617px;top:760px;width:250px;height:40px;background:#fff;border:1px solid #c8c8c8;border-radius:4px;box-sizing:border-box;"></div>
<div class="t" style="left:1683.00px;top:771.73px;font-size:14.5px;color:#6a6a6a;letter-spacing:0.069px;-webkit-text-stroke:0.45px #6a6a6a;">Select action</div>
<svg class="b" style="left:1791px;top:776.5px;" width="10" height="6.2" viewBox="0 0 10 6.2"><path d="M0.6 0.6 L9.4 0.6 L5.0 5.5 Z" fill="#666" stroke="#666" stroke-width="0.5" stroke-linejoin="round"/></svg>
<div class="b" style="left:238px;top:820px;width:1641px;height:81px;background:#f9f9f9;"></div>
<svg class="b" style="left:254px;top:844.5px;" width="24" height="33" viewBox="0 0 24 33"><rect x="0.5" y="0.5" width="22.6" height="31.4" fill="#fff" stroke="#e6e6e6" stroke-width="1"/><defs><linearGradient id="sg844" x1="0" y1="0" x2="0" y2="1"><stop offset="0" stop-color="#333"/><stop offset="0.15" stop-color="#2a8f6a"/><stop offset="0.45" stop-color="#2f55e8"/><stop offset="0.85" stop-color="#3a4fe0"/><stop offset="1" stop-color="#e0902a"/></linearGradient></defs><rect x="1" y="1" width="1.2" height="30" fill="url(#sg844)"/><rect x="4" y="4" width="11" height="0.6" fill="#666" opacity="0.36"/><rect x="4" y="6.5" width="15" height="0.6" fill="#666" opacity="0.15"/><rect x="4" y="8.5" width="8" height="0.6" fill="#666" opacity="0.15"/><rect x="4" y="10.2" width="2" height="0.6" fill="#666" opacity="0.24"/><rect x="16" y="10.2" width="4" height="0.6" fill="#666" opacity="0.24"/><rect x="4" y="12.8" width="6" height="0.6" fill="#666" opacity="0.21"/><rect x="15" y="12.8" width="5" height="0.6" fill="#666" opacity="0.21"/><rect x="4" y="16" width="16" height="0.6" fill="#666" opacity="0.21"/><rect x="4" y="17.2" width="16" height="0.6" fill="#666" opacity="0.18"/><rect x="4" y="19.2" width="16" height="0.6" fill="#666" opacity="0.18"/><rect x="4" y="21" width="3" height="0.6" fill="#666" opacity="0.21"/><rect x="13" y="24.8" width="3" height="0.6" fill="#666" opacity="0.30"/><rect x="4" y="25.6" width="2" height="0.6" fill="#666" opacity="0.12"/><rect x="8" y="25.6" width="2" height="0.6" fill="#666" opacity="0.12"/></svg>
<div class="b" style="left:267.5px;top:865.0px;width:17px;height:17px;background:#fff;border:1px solid #ececec;border-radius:50%;box-sizing:border-box;"></div>
<svg class="b" style="left:271.5px;top:868.0px;" width="10" height="10" viewBox="0 0 10 10"><path d="M2.6 4.2 V3.1 Q2.6 0.8 5 0.8 Q7.4 0.8 7.4 3.1 V4.2" fill="none" stroke="#787878" stroke-width="1.2"/><rect x="0.6" y="3.9" width="8.6" height="5.9" rx="0.7" fill="#787878"/></svg>
<div class="t" style="left:306.60px;top:852.73px;font-size:14.5px;color:#424252;letter-spacing:0.054px;">Company memorandum 2024.pdf</div>
<div class="t" style="left:626.20px;top:835.73px;font-size:14.5px;color:#2b2b3b;letter-spacing:0.122px;-webkit-text-stroke:0.4px #2b2b3b;">Completed</div>
<div class="b" style="left:626px;top:860px;width:74px;height:5px;background:#19b865;border-radius:2.5px 0 0 2.5px;"></div>
<div class="b" style="left:702px;top:860px;width:74px;height:5px;background:#19b865;border-radius:0 2.5px 2.5px 0;"></div>
<div class="t" style="left:626.00px;top:873.02px;font-size:12.5px;color:#555;letter-spacing:-0.073px;">3 days ago</div>
<div class="b" style="left:933px;top:845px;width:32px;height:32px;background:#19b865;border-radius:50%;"></div>
<svg class="b" style="left:941px;top:855px;" width="16" height="12" viewBox="0 0 16 12"><path d="M1.2 5.8 L5.6 10 L14.8 1.2" fill="none" stroke="#fff" stroke-width="1.2" stroke-linecap="round"/></svg>
<div class="t" style="left:1233.50px;top:843.73px;font-size:14.5px;color:#424252;letter-spacing:-0.024px;">Charlie Adams</div>
<div class="t" style="left:1233.50px;top:864.12px;font-size:12.5px;color:#424252;letter-spacing:-0.017px;">3 days ago</div>
<div class="b" style="left:1617px;top:841px;width:250px;height:40px;background:#fff;border:1px solid #c8c8c8;border-radius:4px;box-sizing:border-box;"></div>
<div class="b" style="left:1819px;top:841px;width:1px;height:40px;background:#c8c8c8;"></div>
<div class="t" style="left:1684.65px;top:852.73px;font-size:14.5px;color:#6a6a6a;letter-spacing:0.395px;-webkit-text-stroke:0.45px #6a6a6a;">Download</div>
<svg class="b" style="left:1838px;top:857.5px;" width="9.6" height="6.2" viewBox="0 0 9.6 6.2"><path d="M0.6 0.6 L9.0 0.6 L4.8 5.5 Z" fill="#666" stroke="#666" stroke-width="0.5" stroke-linejoin="round"/></svg>
<svg class="b" style="left:254px;top:925.5px;" width="24" height="33" viewBox="0 0 24 33"><rect x="0.5" y="0.5" width="22.6" height="31.4" fill="#fff" stroke="#e6e6e6" stroke-width="1"/><defs><linearGradient id="sg925" x1="0" y1="0" x2="0" y2="1"><stop offset="0" stop-color="#333"/><stop offset="0.15" stop-color="#2a8f6a"/><stop offset="0.45" stop-color="#2f55e8"/><stop offset="0.85" stop-color="#3a4fe0"/><stop offset="1" stop-color="#e0902a"/></linearGradient></defs><rect x="1" y="1" width="1.2" height="30" fill="url(#sg925)"/><rect x="4" y="4" width="11" height="0.6" fill="#666" opacity="0.36"/><rect x="4" y="6.5" width="15" height="0.6" fill="#666" opacity="0.15"/><rect x="4" y="8.5" width="8" height="0.6" fill="#666" opacity="0.15"/><rect x="4" y="10.2" width="2" height="0.6" fill="#666" opacity="0.24"/><rect x="16" y="10.2" width="4" height="0.6" fill="#666" opacity="0.24"/><rect x="4" y="12.8" width="6" height="0.6" fill="#666" opacity="0.21"/><rect x="15" y="12.8" width="5" height="0.6" fill="#666" opacity="0.21"/><rect x="4" y="16" width="16" height="0.6" fill="#666" opacity="0.21"/><rect x="4" y="17.2" width="16" height="0.6" fill="#666" opacity="0.18"/><rect x="4" y="19.2" width="16" height="0.6" fill="#666" opacity="0.18"/><rect x="4" y="21" width="3" height="0.6" fill="#666" opacity="0.21"/><rect x="13" y="24.8" width="3" height="0.6" fill="#666" opacity="0.30"/><rect x="4" y="25.6" width="2" height="0.6" fill="#666" opacity="0.12"/><rect x="8" y="25.6" width="2" height="0.6" fill="#666" opacity="0.12"/></svg>
<div class="t" style="left:306.60px;top:933.73px;font-size:14.5px;color:#424252;letter-spacing:0.096px;">Company Memorandum 2024.pdf</div>
<div class="t" style="left:626.20px;top:916.73px;font-size:14.5px;color:#2b2b3b;letter-spacing:0.122px;-webkit-text-stroke:0.4px #2b2b3b;">Completed</div>
<div class="b" style="left:626px;top:941px;width:150px;height:5px;background:#19b865;border-radius:2.5px;"></div>
<div class="t" style="left:626.00px;top:954.02px;font-size:12.5px;color:#555;letter-spacing:-0.073px;">3 days ago</div>
<div class="b" style="left:933px;top:926px;width:32px;height:32px;background:#19b865;border-radius:50%;"></div>
<svg class="b" style="left:941px;top:936px;" width="16" height="12" viewBox="0 0 16 12"><path d="M1.2 5.8 L5.6 10 L14.8 1.2" fill="none" stroke="#fff" stroke-width="1.2" stroke-linecap="round"/></svg>
<div class="t" style="left:1233.50px;top:924.73px;font-size:14.5px;color:#424252;letter-spacing:-0.024px;">Charlie Adams</div>
<div class="t" style="left:1233.50px;top:945.12px;font-size:12.5px;color:#424252;letter-spacing:-0.017px;">3 days ago</div>
<div class="b" style="left:1617px;top:922px;width:250px;height:40px;background:#fff;border:1px solid #c8c8c8;border-radius:4px;box-sizing:border-box;"></div>
<div class="b" style="left:1819px;top:922px;width:1px;height:40px;background:#c8c8c8;"></div>
<div class="t" style="left:1684.65px;top:933.73px;font-size:14.5px;color:#6a6a6a;letter-spacing:0.395px;-webkit-text-stroke:0.45px #6a6a6a;">Download</div>
<svg class="b" style="left:1838px;top:938.5px;" width="9.6" height="6.2" viewBox="0 0 9.6 6.2"><path d="M0.6 0.6 L9.0 0.6 L4.8 5.5 Z" fill="#666" stroke="#666" stroke-width="0.5" stroke-linejoin="round"/></svg>
<div class="b" style="left:214px;top:969px;width:1685px;height:45px;background:#f9f9f9;"></div>
<div class="b" style="left:214px;top:969px;width:1685px;height:1px;background:#e6e6e6;"></div>
<div class="t" style="left:238.80px;top:986.73px;font-size:14.5px;color:#666;letter-spacing:0.016px;">Circularo ©2024</div>
<svg class="b" style="left:1849px;top:983px;" width="21" height="21" viewBox="0 0 21 21"><circle cx="10.5" cy="10.5" r="9.2" fill="none" stroke="#666" stroke-width="1.2"/><path d="M7.8 8 Q7.8 5.2 10.5 5.2 Q13.2 5.2 13.2 7.6 Q13.2 9.2 11.2 10.2 Q10.4 10.7 10.4 12" fill="none" stroke="#666" stroke-width="1.3" stroke-linecap="round"/><circle cx="10.4" cy="14.8" r="0.9" fill="#666"/></svg>
</body></html>
